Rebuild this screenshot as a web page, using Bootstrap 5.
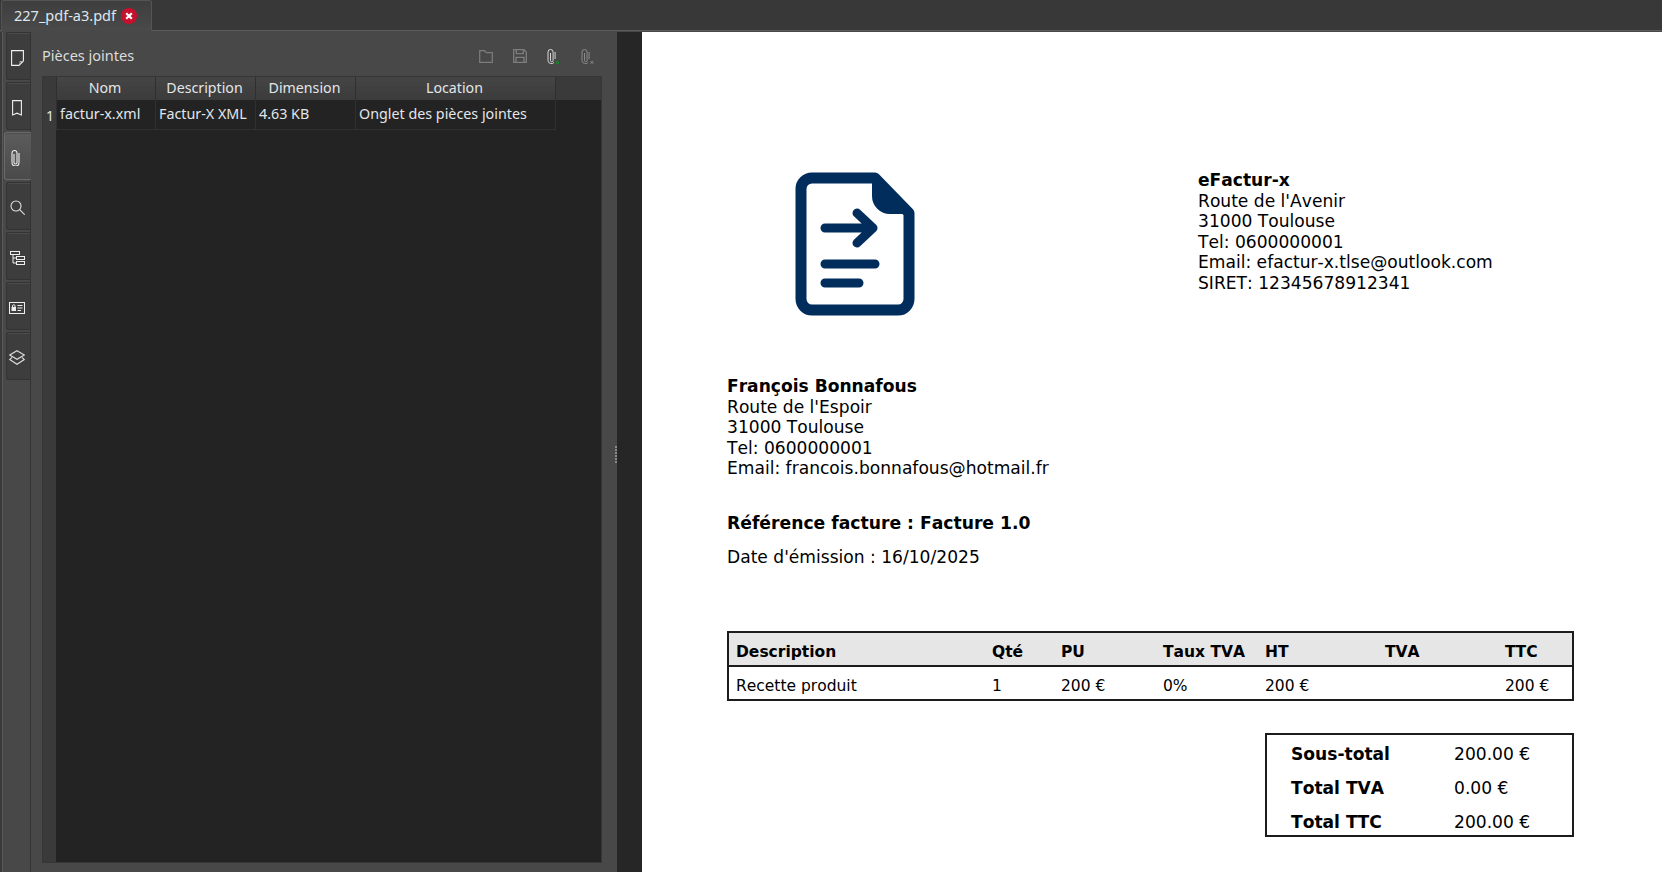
<!DOCTYPE html>
<html lang="fr"><head><meta charset="utf-8"><title>227_pdf-a3.pdf</title>
<link href="https://cdn.jsdelivr.net/npm/bootstrap@5.3.0/dist/css/bootstrap.min.css" rel="stylesheet">
<style>
html,body{height:100%;overflow:hidden;background:#3a3a3a}
body{font-family:"Noto Sans","Open Sans",sans-serif;font-size:14px;color:#e4e4e4}
.app-root{width:1662px;height:872px}
.tabbar{height:32px;flex:none;background:#383838;border-bottom:1px solid #484848;box-shadow:inset 0 -1px 0 #5c5c5c;padding-left:1px}
.doc-tab{width:151px;height:31px;background:linear-gradient(#3e3e3e,#4a4a4a);border:1px solid #545454;border-bottom:0;border-radius:3px 3px 0 0;padding-left:12px;gap:5px;font-size:14.5px;color:#dfe6ee;white-space:nowrap}
.tab-x{width:16px;height:16px;flex:none}
.workarea{height:840px}
.side-rail{width:31px;flex:none;background:#484848;border-left:2px solid #3a3a3a;border-right:1px solid #333;box-shadow:inset 1px 0 0 #595959}
.rail-btn{display:flex;align-items:center;justify-content:center;width:24px;height:48px;margin:0 0 2px 4px;padding:3px 3px 0 0;background:#3d3d3d;border:1px solid #333;border-right:0;border-radius:3px 0 0 3px;box-shadow:inset 0 1px 0 #4c4c4c}
.rail-btn.on{width:27px;margin-left:2px;padding-right:6px;background:linear-gradient(#5c5c5c,#4a4a4a);border-color:#6a6a6a}
.att-panel{width:586px;flex:none;background:#484848;padding:0 15px 0 11px;position:relative}
.att-head{height:44px;padding-top:4px}
.att-title{font-size:14.5px;color:#dcdcdc}
.att-tools{gap:20px;margin-right:7px}
.att-frame{height:787px;background:#232323;border:1px solid #363636;position:relative}
.att-frame::before{content:"";position:absolute;left:0;top:0;bottom:0;width:13px;background:#3a3a3a}
.att-strip{height:23px;background:#3a3a3a;position:relative}
.att-table{position:relative;table-layout:fixed;width:512px;border-collapse:collapse;color:#e2e6ea;margin-top:-23px}
.att-table th{height:23px;font-weight:400;text-align:center;background:linear-gradient(#454545,#3b3b3b);border-right:1px solid #2f2f2f;border-left:1px solid #555;font-size:14.2px;padding:0 1px 0 0;line-height:1}
.att-table th.corner{background:#3a3a3a;border-left:0}
.att-table td{height:29px;background:#232323;border:1px solid #303030;border-top:0;padding:0 3px 0 3.500px;font-size:14.300px;white-space:nowrap;line-height:1;overflow:hidden}
.att-table td.num{background:#3a3a3a;padding:3px 0 0 3px;border:0;font-size:14px}
.grip-dots{position:absolute;right:0;top:414px;width:2px;height:17px;background:repeating-linear-gradient(#8a8a8a 0 2px,transparent 2px 3px)}
.viewer-gap{width:25px;flex:none;background:#262626}
.pdf-page{flex:1;background:#fff;color:#000;font-family:"DejaVu Sans",sans-serif;font-kerning:none;font-size:17.1px;line-height:20.6px;padding:0 88px 0 85px;overflow:hidden}
.doc-top{padding-top:140px;height:344px}
.doc-logo{width:120px;height:144px;margin-left:68px;flex:none}
.seller{margin-left:283px;margin-top:-2px}
.ref-line{font-size:17.2px;font-weight:700;margin:34px 0 0}
.date-line{margin:13.5px 0 0}
.line-box{border:2px solid #1c1c1c}
.inv-table{width:847px;margin-top:63.5px;font-size:15.5px;line-height:19px}
.inv-row{display:grid;grid-template-columns:256px 69px 102px 102px 120px 120px 1fr;padding-left:7px;align-items:center}
.inv-row.thd{height:34px;background:#e6e6e6;font-weight:700;border-bottom:2px solid #1c1c1c;padding-top:7px}
.inv-row.bdy{height:32px;padding-top:7px}
.totals{width:309px;height:104px;margin:32px 0 0 538px;padding:2px 0 0 24px;font-size:17.1px}
.tot-row{height:34px;display:flex;align-items:center}
.tot-row b{width:163px}
</style></head><body>
<div class="app-root d-flex flex-column">
  <div class="tabbar d-flex">
    <div class="doc-tab d-flex align-items-center">227_pdf-a3.pdf
      <svg class="tab-x" viewBox="0 0 16 16"><circle cx="8" cy="8" r="8" fill="#c8102e"/><path d="M5.200 5.200l5.600 5.600M10.800 5.200l-5.600 5.600" stroke="#fff" stroke-width="2.200"/></svg>
    </div>
  </div>
  <div class="workarea d-flex">
    <div class="side-rail">
      <div class="rail-btn"><svg width="13" height="16" viewBox="0 0 13 16" fill="none" stroke="#f2f2f2" stroke-width="1.100"><path d="M.6.600h11.800v10.400l-4.400 4.400H.6z"/><path d="M12 11.500H9v3" stroke-width=".9" stroke="#bbb"/></svg></div>
      <div class="rail-btn"><svg width="10" height="16" viewBox="0 0 10 16" fill="none" stroke="#eee" stroke-width="1.100"><path d="M.6.600h8.800v14.400L5 13.200.6 15z"/></svg></div>
      <div class="rail-btn on"><svg width="9" height="16" viewBox="0 0 9 16" fill="none" stroke="#eee" stroke-width="1.100"><path d="M3 4v8.500a1.500 1.500 0 0 0 3 0V3A2.500 2.500 0 0 0 1 3v9.500a3.500 3.500 0 0 0 7 0V3"/></svg></div>
      <div class="rail-btn"><svg width="15" height="15" viewBox="0 0 15 15" fill="none" stroke="#ddd" stroke-width="1.100"><circle cx="6" cy="6" r="5"/><path d="M9.700 9.700l5 5"/></svg></div>
      <div class="rail-btn"><svg width="15" height="14" viewBox="0 0 15 14" fill="none" stroke="#eee" stroke-width="1"><rect x=".5" y=".5" width="9" height="3"/><rect x="6.500" y="5.500" width="8" height="3"/><rect x="6.500" y="10.500" width="8" height="3"/><path d="M3 4v8h3.500M3 7h3.500"/></svg></div>
      <div class="rail-btn"><svg width="16" height="12" viewBox="0 0 16 12" fill="none" stroke="#eee" stroke-width="1"><rect x=".5" y=".5" width="15" height="11"/><rect x="2.500" y="5" width="4.500" height="4" fill="#eee" stroke="none"/><path d="M3.500 5V4a1.200 1.200 0 0 1 2.500 0v1M8.500 3.500h5M8.500 6h5M8.500 8.500h3.500"/></svg></div>
      <div class="rail-btn"><svg width="16" height="15" viewBox="0 0 16 15" fill="none" stroke="#ddd" stroke-width="1.100"><path d="M8 .7l7.300 4.300L8 9.300.7 5z"/><path d="M3 7.300L.7 9.500 8 14.300l7.300-4.800L13 7.300"/></svg></div>
    </div>
    <div class="att-panel">
      <div class="att-head d-flex align-items-center justify-content-between">
        <span class="att-title">Pièces jointes</span>
        <div class="att-tools d-flex align-items-center">
          <svg width="14" height="13" viewBox="0 0 14 13" fill="none" stroke="#7d7d7d" stroke-width="1.200"><path d="M.7.700h5l1.500 2h6.100v9.600H.7z"/></svg>
          <svg width="14" height="14" viewBox="0 0 14 14" fill="none" stroke="#7d7d7d" stroke-width="1.300"><path d="M.7.700h10.300l2.300 2.300v10.300H.7z"/><path d="M3.300.700v4h7v-4M3 13.300V8.300h8v5"/></svg>
          <svg width="14" height="15" viewBox="0 0 14 15"><path d="M3.500 4v7.500a1.300 1.300 0 0 0 2.600 0V3A2.500 2.500 0 0 0 1 3v8.500a3.400 3.400 0 0 0 6 2M8.100 3v7" fill="none" stroke="#d6d6d6" stroke-width="1"/><path d="M8.500 12h3.500v3H8.500z" fill="#1d7a2c"/></svg>
          <svg width="14" height="15" viewBox="0 0 14 15"><g fill="none" stroke="#8a8a8a" stroke-width="1"><path d="M3.500 4v7.500a1.300 1.300 0 0 0 2.600 0V3A2.500 2.500 0 0 0 1 3v8.500a3.400 3.400 0 0 0 6 2M8.100 3v7"/><path d="M9.500 12l2.800 2.800M12.300 12l-2.800 2.800"/></g></svg>
        </div>
      </div>
      <div class="att-frame">
        <div class="att-strip"></div>
        <table class="att-table">
          <colgroup><col style="width:13px"><col style="width:99px"><col style="width:100px"><col style="width:100px"><col style="width:200px"></colgroup>
          <thead><tr><th class="corner"></th><th>Nom</th><th>Description</th><th>Dimension</th><th>Location</th></tr></thead>
          <tbody><tr><td class="num">1</td><td>factur-x.xml</td><td>Factur-X XML</td><td>4.63 KB</td><td>Onglet des pièces jointes</td></tr></tbody>
        </table>
      </div>
      <div class="grip-dots"></div>
    </div>
    <div class="viewer-gap"></div>
    <div class="pdf-page">
      <div class="doc-top d-flex">
        <svg class="doc-logo" viewBox="0 0 120 144"><path d="M17 6h63l34 35v86a11 11 0 0 1-11 11H17a11 11 0 0 1-11-11V17A11 11 0 0 1 17 6z" fill="none" stroke="#002d5c" stroke-width="11" stroke-linejoin="round"/><path d="M78 4l36 37H95a17 17 0 0 1-17-17z" fill="#002d5c" stroke="#002d5c" stroke-width="2"/><path d="M30 56h48M62 41l16 15-16 15M30 92h50M30 111h34" fill="none" stroke="#002d5c" stroke-width="9" stroke-linecap="round" stroke-linejoin="round"/></svg>
        <div class="seller"><b>eFactur-x</b><br>Route de l'Avenir<br>31000 Toulouse<br>Tel: 0600000001<br>Email: efactur-x.tlse@outlook.com<br>SIRET: 12345678912341</div>
      </div>
      <div><b>François Bonnafous</b><br>Route de l'Espoir<br>31000 Toulouse<br>Tel: 0600000001<br>Email: francois.bonnafous@hotmail.fr</div>
      <p class="ref-line">Référence facture : Facture 1.0</p>
      <p class="date-line">Date d'émission : 16/10/2025</p>
      <div class="inv-table line-box">
        <div class="inv-row thd"><span>Description</span><span>Qté</span><span>PU</span><span>Taux TVA</span><span>HT</span><span>TVA</span><span>TTC</span></div>
        <div class="inv-row bdy"><span>Recette produit</span><span>1</span><span>200 €</span><span>0%</span><span>200 €</span><span></span><span>200 €</span></div>
      </div>
      <div class="totals line-box">
        <div class="tot-row"><b>Sous-total</b><span>200.00 €</span></div>
        <div class="tot-row"><b>Total TVA</b><span>0.00 €</span></div>
        <div class="tot-row"><b>Total TTC</b><span>200.00 €</span></div>
      </div>
    </div>
  </div>
</div>
<script src="https://cdn.jsdelivr.net/npm/bootstrap@5.3.0/dist/js/bootstrap.bundle.min.js"></script>
</body></html>
